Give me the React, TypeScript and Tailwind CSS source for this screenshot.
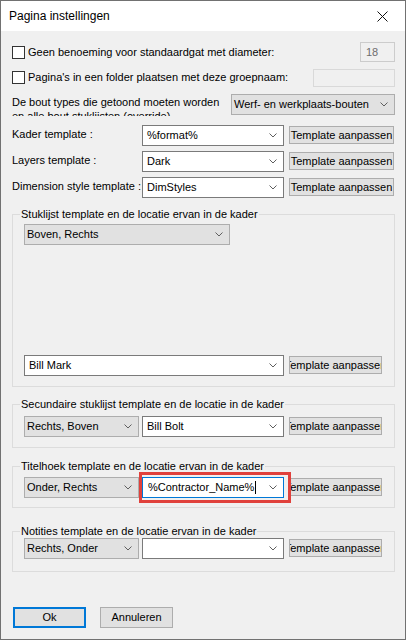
import type { ReactNode } from 'react';

const Chevron = () => (
    <svg width="8" height="5" viewBox="0 0 8 5" className="shrink-0">
        <path d="M0.5 0.5 L4 4 L7.5 0.5" fill="none" stroke="#5f5f5f" strokeWidth="1" />
    </svg>
);

const Checkbox = () => <div className="size-[13px] shrink-0 border border-[#333333] bg-white" />;

type ComboProps = {
    value?: string;
    gray?: boolean;
    focused?: boolean;
    className?: string;
};

const Combo = ({ value = '', gray = false, focused = false, className = '' }: ComboProps) => {
    const look = gray
        ? 'border-[#adadad] bg-[#e1e1e1] pl-[2px]'
        : focused
          ? 'border-[#0078d7] bg-white pl-[5px]'
          : 'border-[#7a7a7a] bg-white pl-[4px]';

    return (
        <div className={`flex h-[21px] shrink-0 items-center border pr-[6px] ${look} ${className}`}>
            <span className="whitespace-nowrap">{value}</span>
            {focused && <span className="ml-[1px] h-[13px] w-px bg-black" />}
            <span className="ml-auto">
                <Chevron />
            </span>
        </div>
    );
};

const Button = ({ children, className = '' }: { children: ReactNode; className?: string }) => (
    <div
        className={`flex h-[18px] shrink-0 items-center justify-center overflow-hidden whitespace-nowrap border border-[#adadad] bg-[#e1e1e1] ${className}`}
    >
        <span className="shrink-0">{children}</span>
    </div>
);

const Group = ({ title, className = '', children }: { title: string; className?: string; children: ReactNode }) => (
    <fieldset className={`border border-[#dcdcdc] px-0 ${className}`}>
        <legend className="ml-[7px] px-[1px] leading-[14px]">{title}</legend>
        {children}
    </fieldset>
);

const TemplateRow = ({ label, value, className = '' }: { label: string; value: string; className?: string }) => (
    <div className={`flex items-start ${className}`}>
        <div className="w-[130px] shrink-0 whitespace-nowrap pt-[2px] leading-[14px]">{label}</div>
        <Combo value={value} className="w-[142px]" />
        <Button className="ml-[5px] mt-[1px] w-[105px]">Template aanpassen</Button>
    </div>
);

const App = () => {
    return (
        <div className="flex h-[640px] w-[406px] flex-col overflow-hidden border border-[#717171] bg-[#f0f0f0] font-['Liberation_Sans',Arial,sans-serif] text-[11px] text-black">
            {/* title bar */}
            <div className="flex h-[30px] shrink-0 items-center bg-white pl-[8px] pr-[17px]">
                <span className="text-[12px]">Pagina instellingen</span>
                <svg width="11" height="11" viewBox="0 0 11 11" className="ml-auto">
                    <path d="M0.5 0.5 L10.5 10.5 M10.5 0.5 L0.5 10.5" stroke="#111111" strokeWidth="1" />
                </svg>
            </div>

            <div className="flex flex-col pl-[11px] pr-[10px]">
                <div className="mt-[11px] flex h-[20px] items-center">
                    <Checkbox />
                    <span className="ml-[3px]">Geen benoeming voor standaardgat met diameter:</span>
                    <div className="ml-auto flex h-[20px] w-[35px] items-center border border-[#cccccc] pl-[5px] text-[#6d6d6d]">
                        18
                    </div>
                </div>

                <div className="mt-[6px] flex h-[19px] items-center">
                    <Checkbox />
                    <span className="ml-[3px]">Pagina's in een folder plaatsen met deze groepnaam:</span>
                    <div className="ml-auto h-[18px] w-[82px] border border-[#d9d9d9]" />
                </div>

                <div className="mt-[7px] flex items-start">
                    <div className="h-[22px] w-[215px] overflow-hidden pt-[1px] leading-[14px]">
                        De bout types die getoond moeten worden
                        <br />
                        en alle bout stuklijsten (override)
                    </div>
                    <Combo gray value="Werf- en werkplaats-bouten" className="ml-auto w-[164px]" />
                </div>

                <TemplateRow label="Kader template :" value="%format%" className="mt-[9px]" />
                <TemplateRow label="Layers template :" value="Dark" className="mt-[5px]" />
                <TemplateRow label="Dimension style template :" value="DimStyles" className="mt-[5px]" />

                <Group title="Stuklijst template en de locatie ervan in de kader" className="mt-[9px]">
                    <div className="flex flex-col px-[11px] pb-[10px] pt-[3px]">
                        <Combo gray value="Boven, Rechts" className="w-[206px]" />
                        <div className="mt-[110px] flex items-start">
                            <Combo value="Bill Mark" className="w-[260px]" />
                            <Button className="ml-[5px] mt-[1px] w-[93px]">Template aanpassen</Button>
                        </div>
                    </div>
                </Group>

                <Group title="Secundaire stuklijst template en de locatie in de kader" className="mt-[10px]">
                    <div className="flex items-start px-[11px] pb-[10px] pt-[5px]">
                        <Combo gray value="Rechts, Boven" className="w-[115px]" />
                        <Combo value="Bill Bolt" className="ml-[3px] w-[142px]" />
                        <Button className="ml-[5px] mt-[1px] w-[93px]">Template aanpassen</Button>
                    </div>
                </Group>

                <Group title="Titelhoek template en de locatie ervan in de kader" className="mt-[11px]">
                    <div className="flex items-start px-[11px] pb-[9px] pt-[4px]">
                        <Combo gray value="Onder, Rechts" className="w-[115px]" />
                        <div className="relative ml-[3px]">
                            <Combo focused value="%Contractor_Name%" className="w-[142px]" />
                            <div className="absolute left-[-3px] top-[-5px] z-10 h-[31px] w-[152px] border-[3px] border-[#e0413c]" />
                        </div>
                        <Button className="ml-[5px] mt-[1px] w-[93px]">Template aanpassen</Button>
                    </div>
                </Group>

                <Group title="Notities template en de locatie ervan in de kader" className="mt-[16px]">
                    <div className="flex items-start px-[11px] pb-[12px] pt-0">
                        <Combo gray value="Rechts, Onder" className="w-[115px]" />
                        <Combo className="ml-[3px] w-[142px]" />
                        <Button className="ml-[5px] mt-[1px] w-[93px]">Template aanpassen</Button>
                    </div>
                </Group>

                <div className="ml-[1px] mt-[35px] flex">
                    <div className="flex h-[21px] w-[73px] items-center justify-center border-2 border-[#0078d7] bg-[#e1e1e1]">
                        Ok
                    </div>
                    <div className="ml-[14px] flex h-[21px] w-[73px] items-center justify-center border border-[#adadad] bg-[#e1e1e1]">
                        Annuleren
                    </div>
                </div>
            </div>
        </div>
    );
};

export default App;
